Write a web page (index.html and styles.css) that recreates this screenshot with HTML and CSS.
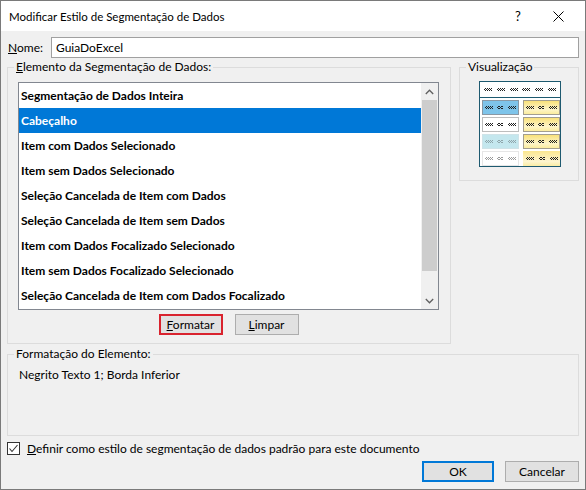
FILE: index.html
```html
<!DOCTYPE html>
<html>
<head>
  <title>Modificar Estilo de Segmentação de Dados</title>
  <link rel="stylesheet" href="styles.css">
</head>
<body>

  <!-- shared checker glyph used by the style preview -->
  <svg class="defs" width="0" height="0">
    <symbol id="zz" viewBox="0 0 8 3">
      <path d="M1 0h1v1h-1z M3 0h1v1h-1z M5 0h1v1h-1z M7 0h1v1h-1z M0 1h1v1h-1z M2 1h1v1h-1z M4 1h1v1h-1z M6 1h1v1h-1z M1 2h1v1h-1z M3 2h1v1h-1z M5 2h1v1h-1z M7 2h1v1h-1z" fill="currentColor"/>
    </symbol>
  </svg>

  <div class="window">
    <div class="titlebar">
      <span class="title">Modificar Estilo de Segmentação de Dados</span>
      <span class="help">?</span>
      <span class="close">
        <svg width="11" height="11" viewBox="0 0 11 11"><path d="M0.5 0.5 L10.5 10.5 M10.5 0.5 L0.5 10.5" stroke="#000" stroke-width="1"/></svg>
      </span>
    </div>

    <div class="content">
      <div class="name-row">
        <label class="name-label"><u>N</u>ome:</label>
        <input class="name-input" type="text" value="GuiaDoExcel">
      </div>

      <div class="main-row">
        <fieldset class="group elements">
          <legend><u>E</u>lemento da Segmentação de Dados:</legend>
          <div class="group-body">
            <div class="listbox">
              <ul class="items">
                <li>Segmentação de Dados Inteira</li>
                <li class="selected">Cabeçalho</li>
                <li>Item com Dados Selecionado</li>
                <li>Item sem Dados Selecionado</li>
                <li>Seleção Cancelada de Item com Dados</li>
                <li>Seleção Cancelada de Item sem Dados</li>
                <li>Item com Dados Focalizado Selecionado</li>
                <li>Item sem Dados Focalizado Selecionado</li>
                <li>Seleção Cancelada de Item com Dados Focalizado</li>
              </ul>
              <div class="scrollbar">
                <div class="arrow">
                  <svg width="9" height="6" viewBox="0 0 9 6"><polyline points="0.8,5 4.5,1.2 8.2,5" fill="none" stroke="#606060" stroke-width="1.3"/></svg>
                </div>
                <div class="thumb"></div>
                <div class="track"></div>
                <div class="arrow">
                  <svg width="9" height="6" viewBox="0 0 9 6"><polyline points="0.8,1 4.5,4.8 8.2,1" fill="none" stroke="#606060" stroke-width="1.3"/></svg>
                </div>
              </div>
            </div>
            <div class="group-buttons">
              <button class="btn marked"><u>F</u>ormatar</button>
              <button class="btn limpar"><u>L</u>impar</button>
            </div>
          </div>
        </fieldset>

        <fieldset class="group preview-group">
          <legend>Visualização</legend>
          <div class="preview">
            <div class="preview-head">
              <svg class="zz"><use href="#zz"/></svg><svg class="zz"><use href="#zz"/></svg><svg class="zz"><use href="#zz"/></svg>
              <svg class="zz"><use href="#zz"/></svg><svg class="zz"><use href="#zz"/></svg><svg class="zz"><use href="#zz"/></svg>
            </div>
            <div class="tiles">
              <div class="tile sel-data"><svg class="zz"><use href="#zz"/></svg><svg class="zz short"><use href="#zz"/></svg><svg class="zz"><use href="#zz"/></svg></div>
              <div class="tile yellow"><svg class="zz"><use href="#zz"/></svg><svg class="zz short"><use href="#zz"/></svg><svg class="zz"><use href="#zz"/></svg></div>
              <div class="tile sel-empty"><svg class="zz"><use href="#zz"/></svg><svg class="zz short"><use href="#zz"/></svg><svg class="zz"><use href="#zz"/></svg></div>
              <div class="tile yellow"><svg class="zz"><use href="#zz"/></svg><svg class="zz short"><use href="#zz"/></svg><svg class="zz"><use href="#zz"/></svg></div>
              <div class="tile unsel-data"><svg class="zz"><use href="#zz"/></svg><svg class="zz short"><use href="#zz"/></svg><svg class="zz"><use href="#zz"/></svg></div>
              <div class="tile yellow"><svg class="zz"><use href="#zz"/></svg><svg class="zz short"><use href="#zz"/></svg><svg class="zz"><use href="#zz"/></svg></div>
              <div class="tile unsel-empty"><svg class="zz"><use href="#zz"/></svg><svg class="zz short"><use href="#zz"/></svg><svg class="zz"><use href="#zz"/></svg></div>
              <div class="tile yellow plain"><svg class="zz"><use href="#zz"/></svg><svg class="zz short"><use href="#zz"/></svg><svg class="zz"><use href="#zz"/></svg></div>
            </div>
          </div>
        </fieldset>
      </div>

      <fieldset class="group format-group">
        <legend>Formatação do Elemento:</legend>
        <div class="format-text">Negrito Texto 1; Borda Inferior</div>
      </fieldset>

      <label class="check-row">
        <span class="checkbox">
          <svg width="11" height="11" viewBox="0 0 11 11"><polyline points="1.5,5.5 4,8.5 9.5,2" fill="none" stroke="#333" stroke-width="1.1"/></svg>
        </span>
        <span><u>D</u>efinir como estilo de segmentação de dados padrão para este documento</span>
      </label>

      <div class="dialog-buttons">
        <button class="btn default">OK</button>
        <button class="btn cancel">Cancelar</button>
      </div>
    </div>
  </div>

</body>
</html>
```

FILE: styles.css
```css
body {
  margin: 0;
  font-family: Lato, "Noto Sans", sans-serif;
  font-size: 12px;
  color: #000;
}

.defs {
  position: absolute;
  width: 0;
  height: 0;
}

.window {
  width: 586px;
  height: 490px;
  box-sizing: border-box;
  border: 1px solid #7a7a7a;
  background-color: #f0f0f0;
  overflow: hidden;
}

/* Title bar */
.titlebar {
  height: 30px;
  background-color: #fff;
  display: flex;
  align-items: center;
}

.title {
  padding-left: 8px;
  flex: 1;
  font-size: 11.5px;
}

.help {
  width: 34px;
  text-align: center;
  font-size: 13px;
}

.close {
  width: 46px;
  margin-right: 4px;
  display: flex;
  justify-content: center;
}

.content {
  padding: 0 6px;
}

/* Name field */
.name-row {
  display: flex;
  align-items: center;
  margin-top: 6px;
  height: 21px;
}

.name-label {
  width: 43px;
  padding-left: 1px;
}

.name-input {
  flex: 1;
  height: 21px;
  box-sizing: border-box;
  border: 1px solid #a0a0a0;
  padding: 0 4px;
  font: inherit;
  outline: none;
}

/* Group boxes */
.group {
  margin: 0;
  padding: 0;
  border: 1px solid #dcdcdc;
  min-width: 0;
}

.group legend {
  margin-left: 6px;
  padding: 0 2px;
  line-height: 16px;
  color: #000;
}

.main-row {
  display: flex;
  gap: 8px;
  margin-top: 1px;
  align-items: flex-start;
}

.elements {
  width: 444px;
  box-sizing: border-box;
}

.group-body {
  padding: 7px 11px 8px 10px;
}

/* List of slicer elements */
.listbox {
  height: 228px;
  box-sizing: border-box;
  border: 1px solid #828790;
  background-color: #fff;
  display: flex;
}

.items {
  list-style: none;
  margin: 0;
  padding: 0;
  flex: 1;
}

.items li {
  height: 25px;
  line-height: 25px;
  padding-left: 2px;
  font-weight: bold;
  white-space: nowrap;
}

.items li.selected {
  background-color: #0078d7;
  color: #fff;
}

.scrollbar {
  width: 17px;
  background-color: #f0f0f0;
  display: flex;
  flex-direction: column;
}

.scrollbar .arrow {
  height: 17px;
  display: flex;
  align-items: center;
  justify-content: center;
}

.scrollbar .thumb {
  height: 171px;
  margin: 0 1px;
  background-color: #cdcdcd;
}

.scrollbar .track {
  flex: 1;
}

.group-buttons {
  display: flex;
  justify-content: center;
  gap: 12px;
  margin-top: 4px;
}

/* Buttons */
.btn {
  height: 21px;
  box-sizing: border-box;
  border: 1px solid #adadad;
  background-color: #e1e1e1;
  font: inherit;
  color: #000;
  padding: 0;
}

.btn.marked {
  width: 64px;
  border: 2px solid #d9232e;
}

.btn.limpar {
  width: 64px;
}

.btn.default {
  width: 72px;
  border: 2px solid #0078d7;
}

.btn.cancel {
  width: 74px;
}

/* Style preview */
.preview-group {
  width: 120px;
  box-sizing: border-box;
}

.preview {
  width: 82px;
  height: 86px;
  box-sizing: border-box;
  margin: 6px auto 13px;
  position: relative;
  left: 1px;
  border: 1px solid #1e5a70;
  background-color: #fff;
  overflow: hidden;
}

.preview-head {
  height: 15px;
  border-bottom: 1px solid #1e5a70;
  display: flex;
  align-items: center;
  justify-content: space-around;
  padding: 0 2px;
  color: #222;
}

.zz {
  width: 8px;
  height: 3px;
  shape-rendering: crispEdges;
}

.zz.short {
  width: 6px;
}

.tiles {
  display: grid;
  grid-template-columns: 37px 37px;
  grid-auto-rows: 15px;
  column-gap: 4px;
  row-gap: 2px;
  padding: 2px 2px 0;
}

.tile {
  box-sizing: border-box;
  display: flex;
  align-items: center;
  justify-content: space-around;
  color: #222;
}

.sel-data {
  background-color: #7ec4ea;
  border: 1px solid #8a98a4;
}

.sel-empty {
  background-color: #fff;
  border: 1px solid #bdbdbd;
}

.unsel-data {
  background-color: #c4e7ee;
  border: 1px solid #cfe3e8;
  color: #8fa5aa;
}

.unsel-empty {
  background-color: #fff;
  border: 1px solid #e6e6e6;
  color: #9a9a9a;
}

.yellow {
  background: linear-gradient(#f9e17a, #fdf4c8 65%, #fbec9e);
  border: 1px solid #a39e90;
}

.yellow.plain {
  border: none;
  background: linear-gradient(#fae690, #fdf5cf 70%, #fbeda4);
}

/* Element formatting description */
.format-group {
  margin-top: 2px;
}

.format-text {
  padding: 5px 11px 52px;
  line-height: 16px;
}

/* Default style checkbox */
.check-row {
  display: flex;
  align-items: center;
  gap: 7px;
  margin-top: 4px;
  height: 16px;
}

.checkbox {
  width: 13px;
  height: 13px;
  box-sizing: border-box;
  border: 1px solid #333;
  background-color: #fff;
  display: flex;
  align-items: center;
  justify-content: center;
}

.dialog-buttons {
  display: flex;
  justify-content: flex-end;
  gap: 11px;
  margin-top: 5px;
}
```
